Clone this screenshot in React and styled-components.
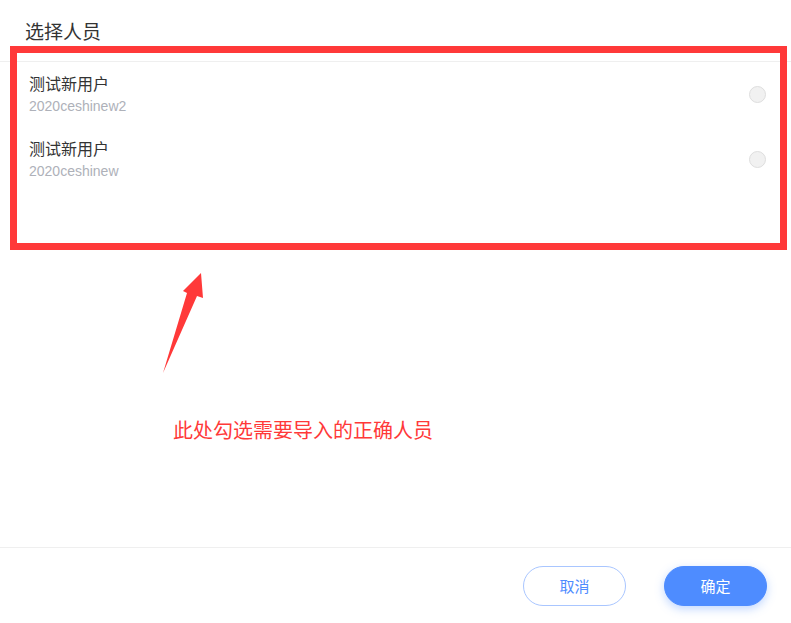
import React, { useState } from "react";
import styled, { createGlobalStyle } from "styled-components";

const GlobalStyle = createGlobalStyle`
  html, body {
    margin: 0;
    padding: 0;
    background: #fff;
  }
  body {
    font-family: "Liberation Sans", "Noto Sans CJK SC", sans-serif;
  }
`;

const Page = styled.div`
  position: relative;
  height: 623px;
  display: flex;
  flex-direction: column;
  overflow: hidden;
`;

const Header = styled.div`
  height: 62px;
  box-sizing: border-box;
  padding: 17px 25px 0;
  border-bottom: 1px solid #efefef;
  font-size: 19px;
  color: #333;
`;

const List = styled.div`
  flex: 1;
`;

const Row = styled.div`
  height: 65px;
  display: flex;
  align-items: center;
  justify-content: space-between;
  padding: 0 25px 0 29px;
`;

const Info = styled.div`
  display: flex;
  flex-direction: column;
  gap: 3px;
  padding-top: 2px;
`;

const Name = styled.div`
  font-size: 16px;
  line-height: 19px;
  color: #333;
`;

const Account = styled.div`
  font-size: 14px;
  line-height: 19px;
  color: #aeb1b9;
`;

const Radio = styled.span`
  width: 15px;
  height: 15px;
  border-radius: 50%;
  border: 1px solid #dedede;
  background: ${(p) => (p.checked ? "#4e8cff" : "#f1f1f1")};
`;

const Footer = styled.div`
  height: 76px;
  box-sizing: border-box;
  border-top: 1px solid #efefef;
  display: flex;
  justify-content: flex-end;
  align-items: center;
  gap: 38px;
  padding: 0 24px 0 0;
`;

const Button = styled.button`
  width: 103px;
  height: 40px;
  border-radius: 20px;
  font-family: "Liberation Sans", "Noto Sans CJK SC", sans-serif;
  font-size: 15px;
  cursor: pointer;
  border: 1px solid ${(p) => (p.primary ? "#4e8cff" : "#a9c6ff")};
  background: ${(p) => (p.primary ? "#4e8cff" : "#fff")};
  color: ${(p) => (p.primary ? "#fff" : "#4e8cff")};
  box-shadow: ${(p) => (p.primary ? "0 3px 10px rgba(78, 140, 255, 0.35)" : "none")};
`;

// annotation overlays
const Mark = styled.div`
  position: absolute;
  left: 10px;
  top: 46px;
  width: 777px;
  height: 204px;
  box-sizing: border-box;
  border: 7px solid #ff3939;
  pointer-events: none;
`;

const Arrow = styled.svg`
  position: absolute;
  left: 0;
  top: 0;
  pointer-events: none;
`;

const Note = styled.div`
  position: absolute;
  left: 173px;
  top: 415px;
  font-size: 20px;
  color: #ff3939;
`;

const users = [
  { name: "测试新用户", account: "2020ceshinew2" },
  { name: "测试新用户", account: "2020ceshinew" },
];

export default function App() {
  const [picked, setPicked] = useState(null);
  return (
    <Page>
      <GlobalStyle />
      <Header>选择人员</Header>
      <List>
        {users.map((u, i) => (
          <Row key={i} onClick={() => setPicked(i)}>
            <Info>
              <Name>{u.name}</Name>
              <Account>{u.account}</Account>
            </Info>
            <Radio checked={picked === i} />
          </Row>
        ))}
      </List>
      <Footer>
        <Button>取消</Button>
        <Button primary>确定</Button>
      </Footer>
      <Mark />
      <Arrow width="791" height="623">
        <polygon points="163,373 187,293 183,291 201,273 203,298 197,296" fill="#ff3939" />
      </Arrow>
      <Note>此处勾选需要导入的正确人员</Note>
    </Page>
  );
}
